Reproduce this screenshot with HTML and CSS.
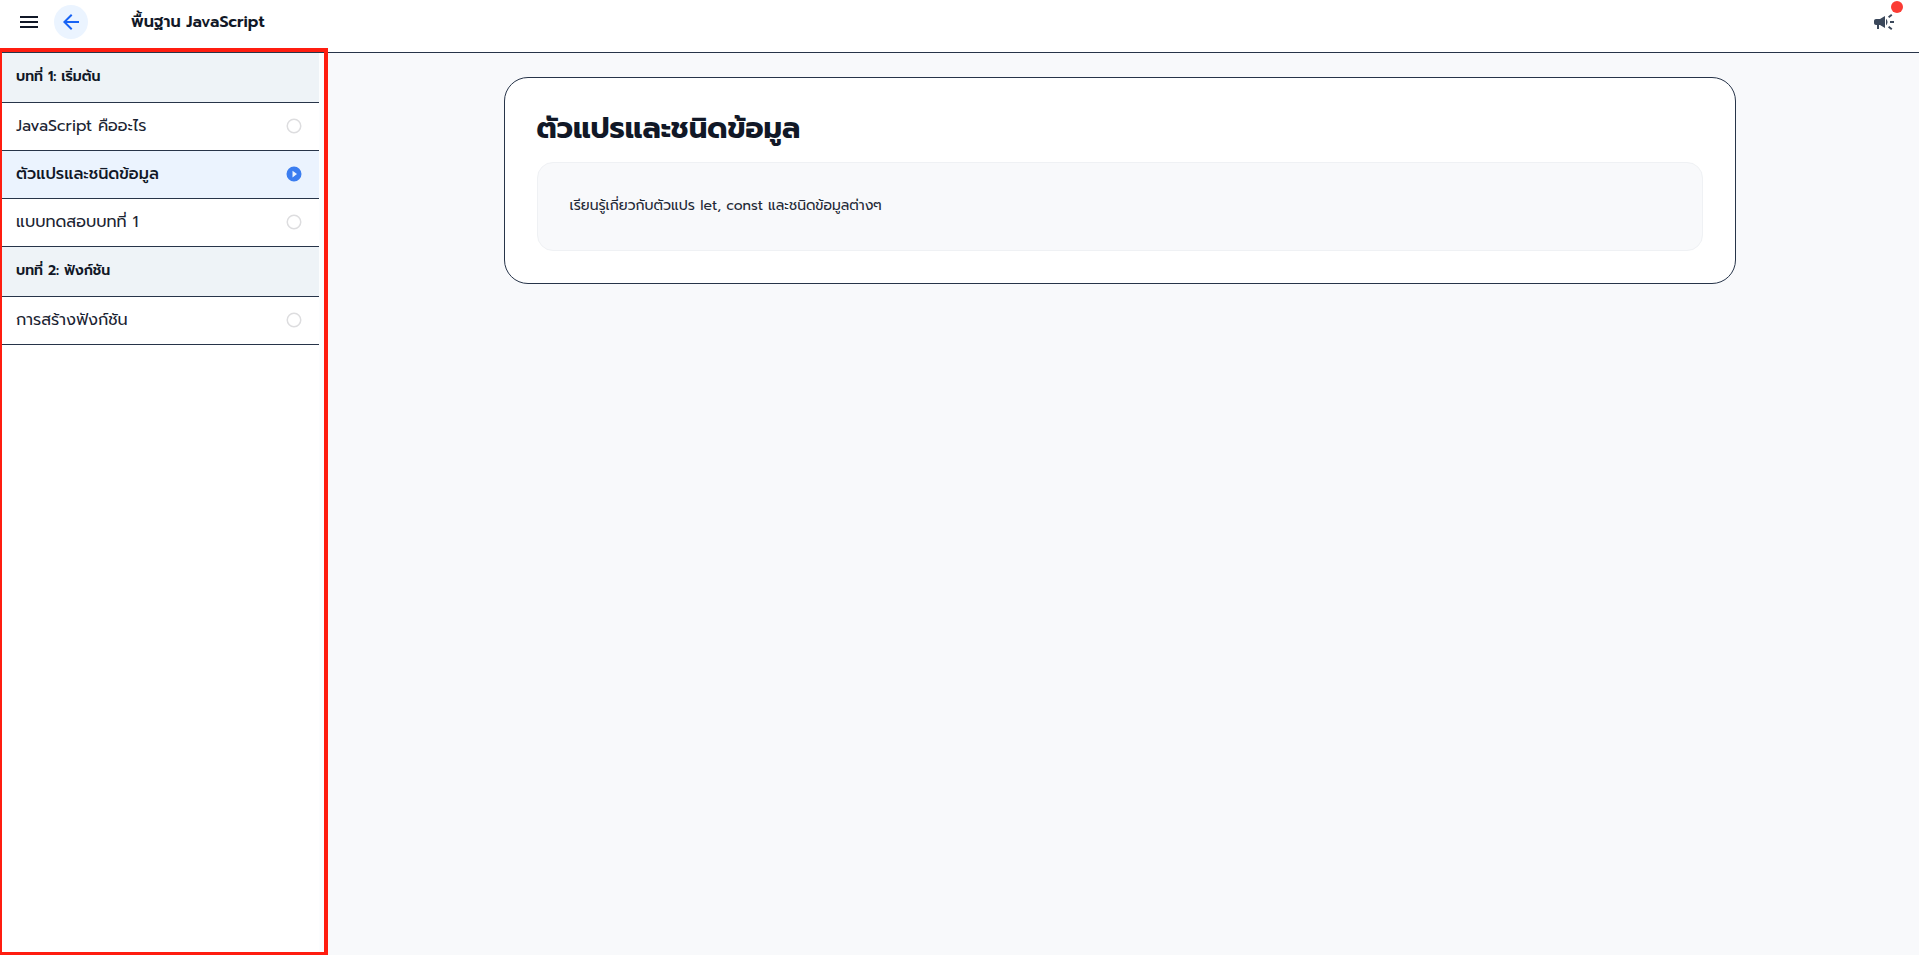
FILE: index.html
```html
<!DOCTYPE html>
<html lang="th">
<head>
<meta charset="utf-8">
<meta name="viewport" content="width=device-width, initial-scale=1">
<title>พื้นฐาน JavaScript</title>
<link rel="stylesheet" href="styles.css">
</head>
<body>
<header class="topbar">
  <button class="icon-btn" type="button" aria-label="เมนู">
    <svg width="24" height="24" viewBox="0 0 24 24" fill="currentColor"><path d="M3 18h18v-2H3v2zm0-5h18v-2H3v2zm0-7v2h18V6H3z"/></svg>
  </button>
  <button class="icon-btn back-btn" type="button" aria-label="ย้อนกลับ">
    <svg width="24" height="24" viewBox="0 0 24 24" fill="currentColor"><path d="M20 11H7.83l5.59-5.59L12 4l-8 8 8 8 1.41-1.41L7.83 13H20v-2z"/></svg>
  </button>
  <span class="course-title">พื้นฐาน JavaScript</span>
  <button class="icon-btn news-btn" type="button" aria-label="ประกาศ">
    <svg width="24" height="24" viewBox="0 0 24 24" fill="currentColor"><path d="M18 11v2h4v-2h-4zm-2 6.610c.96.71 2.210 1.650 3.200 2.390.4-.53.8-1.070 1.200-1.600-.99-.74-2.240-1.680-3.200-2.400-.4.54-.8 1.080-1.200 1.610zM20.400 5.600c-.4-.53-.8-1.070-1.200-1.600-.99.74-2.240 1.680-3.200 2.400.4.53.8 1.070 1.200 1.600.96-.72 2.210-1.650 3.200-2.400zM4 9c-1.100 0-2 .9-2 2v2c0 1.100.9 2 2 2h1v4h2v-4h1l5 3V6L8 9H4zm11.500 3c0-1.330-.58-2.530-1.500-3.350v6.690c.92-.81 1.500-2.010 1.500-3.340z"/></svg>
    <span class="news-dot"></span>
  </button>
</header>
<div class="layout">
  <nav class="sidebar" aria-label="บทเรียน">
    <h2 class="chapter">บทที่ 1: เริ่มต้น</h2>
    <a class="lesson" href="#"><span>JavaScript คืออะไร</span><svg class="status" width="18" height="18" viewBox="0 0 24 24" fill="currentColor"><path d="M12 2a10 10 0 1 0 0 20 10 10 0 0 0 0-20zm0 18a8 8 0 1 1 0-16 8 8 0 0 1 0 16z"/></svg></a>
    <a class="lesson lesson-active" href="#" aria-current="page"><span>ตัวแปรและชนิดข้อมูล</span><svg class="status" width="18" height="18" viewBox="0 0 24 24" fill="currentColor"><path d="M12 2a10 10 0 1 0 0 20 10 10 0 0 0 0-20zm-2 14.500v-9l6 4.500-6 4.500z"/></svg></a>
    <a class="lesson" href="#"><span>แบบทดสอบบทที่ 1</span><svg class="status" width="18" height="18" viewBox="0 0 24 24" fill="currentColor"><path d="M12 2a10 10 0 1 0 0 20 10 10 0 0 0 0-20zm0 18a8 8 0 1 1 0-16 8 8 0 0 1 0 16z"/></svg></a>
    <h2 class="chapter">บทที่ 2: ฟังก์ชัน</h2>
    <a class="lesson" href="#"><span>การสร้างฟังก์ชัน</span><svg class="status" width="18" height="18" viewBox="0 0 24 24" fill="currentColor"><path d="M12 2a10 10 0 1 0 0 20 10 10 0 0 0 0-20zm0 18a8 8 0 1 1 0-16 8 8 0 0 1 0 16z"/></svg></a>
    <div class="highlight"></div>
  </nav>
  <main class="content">
    <article class="card">
      <h1 class="card-title">ตัวแปรและชนิดข้อมูล</h1>
      <div class="card-body"><p class="card-text">เรียนรู้เกี่ยวกับตัวแปร let, const และชนิดข้อมูลต่างๆ</p></div>
    </article>
  </main>
</div>
</body>
</html>
```
FILE: styles.css
```css
* { box-sizing: border-box; }

body {
  margin: 0;
  min-height: 100vh;
  display: flex;
  flex-direction: column;
  background: #f8f9fb;
  color: #111827;
  font-family: Prompt, "Noto Sans Thai", Inter, "Noto Sans", sans-serif;
  font-size: 16px;
  line-height: 24px;
}

.topbar {
  display: flex;
  align-items: center;
  height: 53px;
  padding: 0 18px 8px 12px;
  background: #fff;
  border-bottom: 1px solid #273449;
}

.icon-btn {
  position: relative;
  display: flex;
  align-items: center;
  justify-content: center;
  width: 34px;
  height: 34px;
  padding: 0;
  border: 0;
  border-radius: 50%;
  background: none;
  color: #111827;
}

.back-btn {
  margin-left: 8px;
  background: #ebf4ff;
  color: #1763f5;
}

.course-title {
  margin-left: 43px;
  font-weight: 600;
}

.news-btn {
  margin-left: auto;
  color: #3b485b;
}

.news-dot {
  position: absolute;
  top: -4px;
  right: -2px;
  width: 12px;
  height: 12px;
  border-radius: 50%;
  background: #fb3b34;
}

.layout {
  flex: 1;
  display: flex;
}

.sidebar {
  position: relative;
  width: 320px;
  flex: none;
  background: #fff;
  border-right: 1px solid #dcdfe3;
}

.sidebar::after {
  content: "";
  position: absolute;
  top: 0;
  bottom: 0;
  left: 100%;
  width: 8px;
  background: #fcfdfe;
}

.highlight {
  position: absolute;
  z-index: 1;
  top: -5px;
  right: -9px;
  bottom: 0;
  left: 0;
  border: 4px solid #ff1d10;
  border-width: 4px 4px 3px 2px;
  pointer-events: none;
}

.chapter {
  margin: 0;
  padding: 12px 16px 13px;
  border-bottom: 1px solid #273449;
  background: #eef3f7;
  font-size: 14px;
  font-weight: 600;
  line-height: 24px;
}

.lesson {
  display: flex;
  align-items: center;
  justify-content: space-between;
  padding: 11px 16px 12px;
  border-bottom: 1px solid #273449;
  color: #1b2432;
  text-decoration: none;
}

.lesson-active {
  background: #ebf3fe;
  color: #111827;
  font-weight: 500;
}

.status { color: #dddddf; }

.lesson-active .status { color: #3b7df0; }

.content {
  flex: 1;
  padding: 24px;
}

.card {
  max-width: 1232px;
  margin: 0 auto;
  padding: 32px;
  border: 1px solid #273449;
  border-radius: 24px;
  background: #fff;
}

.card-title {
  margin: 0 0 16px;
  font-size: 29px;
  font-weight: 700;
  line-height: 36px;
}

.card-body {
  padding: 31px 32px 32px;
  border: 1px solid #eff1f4;
  border-radius: 16px;
  background: #f8f9fb;
}

.card-text {
  margin: 0;
  color: #1f2937;
  font-size: 14px;
  line-height: 24px;
}
```
